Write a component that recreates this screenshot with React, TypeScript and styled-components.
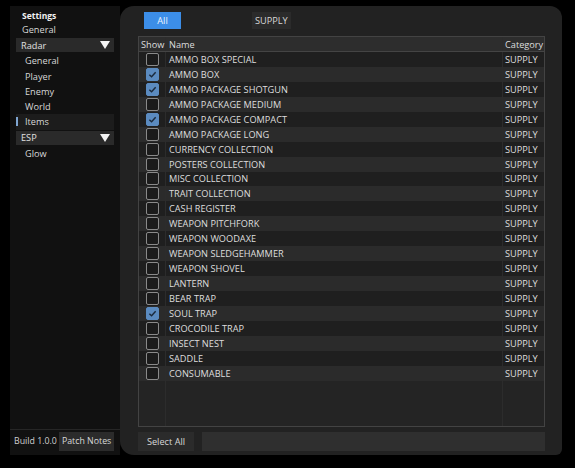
import styled, { createGlobalStyle } from "styled-components";

const GlobalStyle = createGlobalStyle`
  html, body {
    margin: 0;
    padding: 0;
    background: #000;
    font-family: "Open Sans", "Noto Sans", sans-serif;
  }
`;

const Window = styled.div`
  display: flex;
  margin: 6px 0 0 10px;
  width: 552px;
  height: 449px;
`;

const Sidebar = styled.div`
  width: 110px;
  background: #111111;
  display: flex;
  flex-direction: column;
  padding: 3px 0 0 6px;
  box-sizing: border-box;
  color: #d8d8d8;
  font-size: 9.2px;
`;

const NavList = styled.div`
  flex: 1;
  display: flex;
  flex-direction: column;
  padding-right: 6px;
`;

const Title = styled.div`
  font-weight: 700;
  font-size: 8.5px;
  color: #f2f2f2;
  height: 13px;
  line-height: 13px;
  padding-left: 6px;
`;

const NavItem = styled.div<{ $sub?: boolean; $active?: boolean }>`
  position: relative;
  height: 15.3px;
  line-height: 15.3px;
  padding-left: ${(p) => (p.$sub ? "9px" : "6px")};
  background: ${(p) => (p.$active ? "#1c1c1c" : "transparent")};
  &::before {
    content: "";
    display: ${(p) => (p.$active ? "block" : "none")};
    position: absolute;
    left: 0;
    top: 3px;
    width: 2px;
    height: 9px;
    background: #7fa6d2;
  }
`;

const Group = styled.div`
  display: flex;
  align-items: center;
  justify-content: space-between;
  height: 14px;
  margin: 1px 0;
  padding: 0 4px 0 5px;
  background: #2a2a2a;
  color: #e0e0e0;
`;

const Triangle = styled.span`
  width: 0;
  height: 0;
  border-left: 5px solid transparent;
  border-right: 5px solid transparent;
  border-top: 8px solid #f4f4f4;
`;

const SideFooter = styled.div`
  display: flex;
  align-items: center;
  gap: 2px;
  border-top: 1px solid #262626;
  margin-left: -6px;
  padding: 0 0 3px 4px;
  height: 22px;
  color: #d0d0d0;
  font-size: 8.8px;
  white-space: nowrap;
`;

const Button = styled.div<{ $primary?: boolean; $tall?: boolean }>`
  display: inline-flex;
  align-items: center;
  justify-content: center;
  background: ${(p) => (p.$primary ? "#3c8ee8" : "#2b2b2b")};
  color: ${(p) => (p.$primary ? "#eef5ff" : "#d8d8d8")};
  height: ${(p) => (p.$tall ? "19px" : "17px")};
  padding: 0 3px;
  font-size: inherit;
  box-sizing: border-box;
  white-space: nowrap;
`;

const Main = styled.div`
  flex: 1;
  background: #222222;
  border-radius: 14px 12px 6px 14px;
  padding: 6px 17px 4px 18px;
  display: flex;
  flex-direction: column;
  box-sizing: border-box;
  font-size: 9.2px;
`;

const FilterBar = styled.div`
  display: flex;
  align-items: center;
  height: 17px;
  padding-left: 6px;
  gap: 71px;
  margin-bottom: 7px;
`;

const Table = styled.div`
  flex: 1;
  border: 1px solid #434343;
  display: flex;
  flex-direction: column;
  background: #242424;
  overflow: hidden;
`;

const Row = styled.div<{ $alt?: boolean; $head?: boolean }>`
  display: grid;
  grid-template-columns: 27px 337px 1fr;
  height: ${(p) => (p.$head ? "14px" : "14.95px")};
  background: ${(p) => (p.$head ? "#2d2d2d" : p.$alt ? "#2b2b2b" : "#1f1f1f")};
  border-bottom: ${(p) => (p.$head ? "1px solid #444" : "none")};
  color: #dedede;
  flex-shrink: 0;
`;

const Cell = styled.div<{ $center?: boolean }>`
  display: flex;
  align-items: center;
  justify-content: ${(p) => (p.$center ? "center" : "flex-start")};
  padding-left: ${(p) => (p.$center ? "0" : "3px")};
  white-space: nowrap;
  overflow: hidden;
  border-right: 1px solid #2c2c2c;
  &:first-child {
    padding-left: ${(p) => (p.$center ? "0" : "2px")};
  }
  &:last-child {
    border-right: none;
    padding-left: 2px;
  }
`;

const Box = styled.div<{ $on?: boolean }>`
  width: 11px;
  height: 11px;
  border: 1px solid ${(p) => (p.$on ? "#5b8bc0" : "#8a8a8a")};
  border-radius: 2px;
  background: ${(p) => (p.$on ? "#5b8bc0" : "#1b1b1b")};
  display: flex;
  align-items: center;
  justify-content: center;
`;

const Filler = styled.div`
  flex: 1;
  display: grid;
  grid-template-columns: 27px 337px 1fr;
  & > div {
    border-right: 1px solid #2c2c2c;
  }
  & > div:last-child {
    border-right: none;
  }
`;

const BottomBar = styled.div`
  display: flex;
  gap: 8px;
  margin-top: 5px;
  height: 19px;
`;

const SearchField = styled.div`
  flex: 1;
  background: #2f2f2f;
`;

const items: [string, boolean][] = [
  ["AMMO BOX SPECIAL", false],
  ["AMMO BOX", true],
  ["AMMO PACKAGE SHOTGUN", true],
  ["AMMO PACKAGE MEDIUM", false],
  ["AMMO PACKAGE COMPACT", true],
  ["AMMO PACKAGE LONG", false],
  ["CURRENCY COLLECTION", false],
  ["POSTERS COLLECTION", false],
  ["MISC COLLECTION", false],
  ["TRAIT COLLECTION", false],
  ["CASH REGISTER", false],
  ["WEAPON PITCHFORK", false],
  ["WEAPON WOODAXE", false],
  ["WEAPON SLEDGEHAMMER", false],
  ["WEAPON SHOVEL", false],
  ["LANTERN", false],
  ["BEAR TRAP", false],
  ["SOUL TRAP", true],
  ["CROCODILE TRAP", false],
  ["INSECT NEST", false],
  ["SADDLE", false],
  ["CONSUMABLE", false],
];

function Check() {
  return (
    <svg width="9" height="9" viewBox="0 0 10 10">
      <path d="M1.5 5.2 L4 7.5 L8.5 2.5" fill="none" stroke="#1b2a3c" strokeWidth="1.6" />
    </svg>
  );
}

export default function App() {
  return (
    <>
      <GlobalStyle />
      <Window>
        <Sidebar>
          <NavList>
            <Title>Settings</Title>
            <NavItem>General</NavItem>
            <Group>
              Radar
              <Triangle />
            </Group>
            <NavItem $sub>General</NavItem>
            <NavItem $sub>Player</NavItem>
            <NavItem $sub>Enemy</NavItem>
            <NavItem $sub>World</NavItem>
            <NavItem $sub $active>Items</NavItem>
            <Group>
              ESP
              <Triangle />
            </Group>
            <NavItem $sub>Glow</NavItem>
          </NavList>
          <SideFooter>
            <span>Build 1.0.0</span>
            <Button $tall>Patch Notes</Button>
          </SideFooter>
        </Sidebar>
        <Main>
          <FilterBar>
            <Button $primary style={{ width: 37 }}>All</Button>
            <Button>SUPPLY</Button>
          </FilterBar>
          <Table>
            <Row $head>
              <Cell>Show</Cell>
              <Cell>Name</Cell>
              <Cell>Category</Cell>
            </Row>
            {items.map(([name, on], i) => (
              <Row key={name} $alt={i % 2 === 1}>
                <Cell $center>
                  <Box $on={on}>{on && <Check />}</Box>
                </Cell>
                <Cell>{name}</Cell>
                <Cell>SUPPLY</Cell>
              </Row>
            ))}
            <Filler>
              <div />
              <div />
              <div />
            </Filler>
          </Table>
          <BottomBar>
            <Button $tall style={{ width: 56 }}>Select All</Button>
            <SearchField />
          </BottomBar>
        </Main>
      </Window>
    </>
  );
}
